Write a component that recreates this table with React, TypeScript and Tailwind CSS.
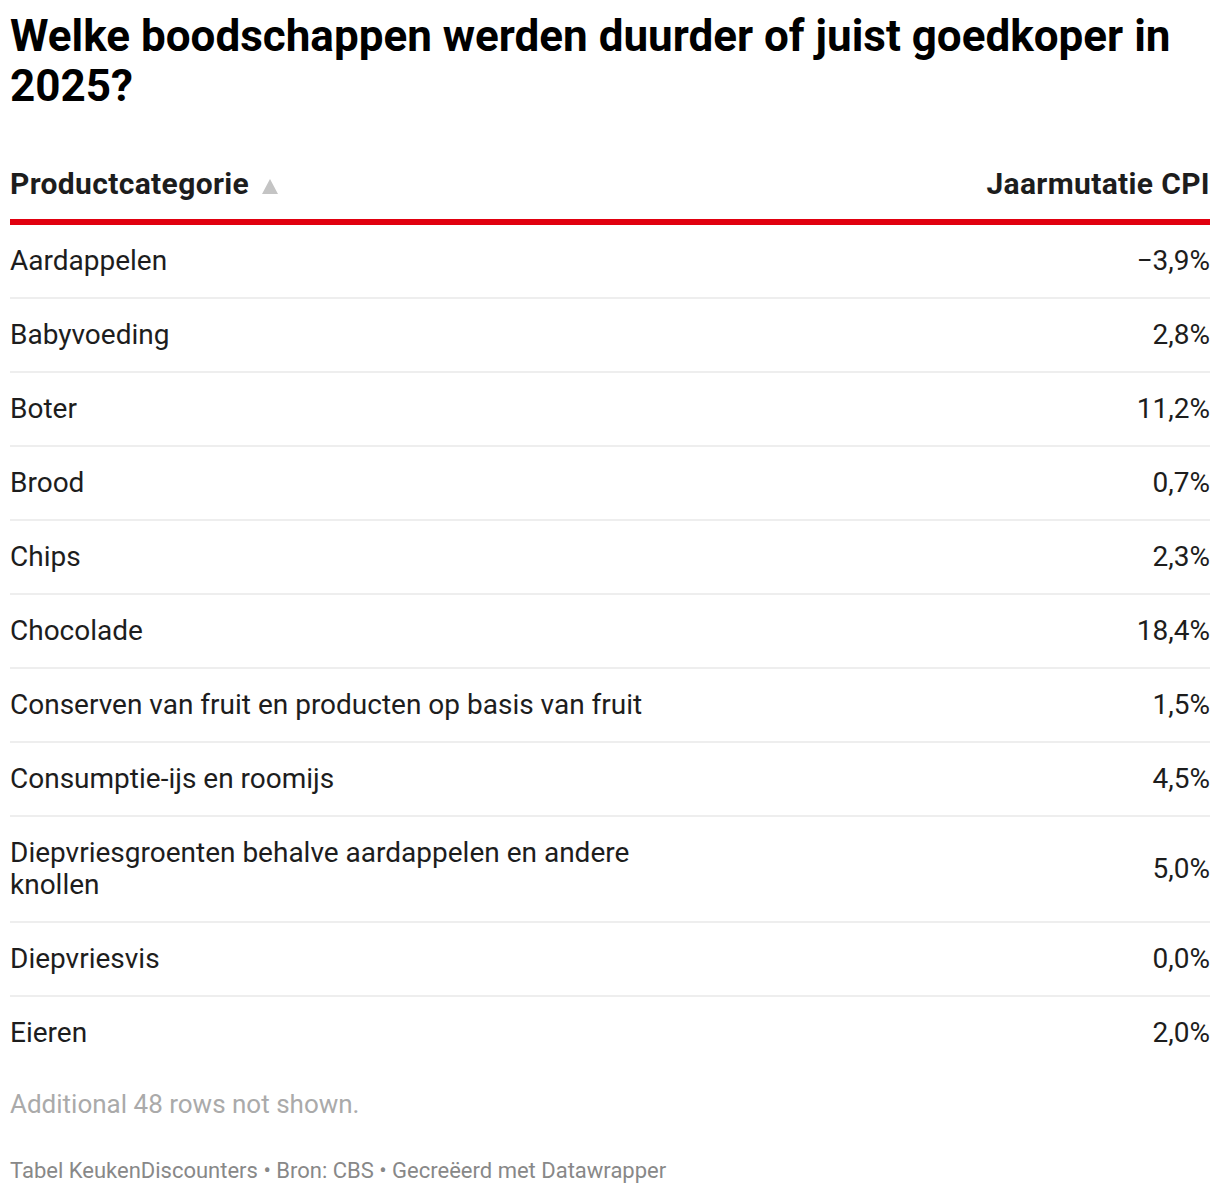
const rows: [string, string][] = [
  ['Aardappelen', '−3,9%'],
  ['Babyvoeding', '2,8%'],
  ['Boter', '11,2%'],
  ['Brood', '0,7%'],
  ['Chips', '2,3%'],
  ['Chocolade', '18,4%'],
  ['Conserven van fruit en producten op basis van fruit', '1,5%'],
  ['Consumptie-ijs en roomijs', '4,5%'],
  ['Diepvriesgroenten behalve aardappelen en andere knollen', '5,0%'],
  ['Diepvriesvis', '0,0%'],
  ['Eieren', '2,0%'],
];

export default function App() {
  return (
    <div className="min-h-[1194px] w-[1220px] bg-white px-[10px] pt-[11px] text-[#1d1d1d]" style={{ fontFamily: 'Roboto, "Liberation Sans", sans-serif' }}>
      <h1 className="text-[44px] font-bold leading-[50px] text-black">
        Welke boodschappen werden duurder of juist goedkoper in 2025?
      </h1>

      <div className="mt-[57px]">
        <div className="flex items-end justify-between pb-[19px] border-b-[6px] border-[#e1000f]">
          <div className="flex items-center gap-[13px] text-[30px] font-bold leading-[32px] tracking-[0.35px]">
            Productcategorie
            <svg width="16" height="15" viewBox="0 0 16 15" className="mt-[4px]">
              <path d="M8 0 L16 15 L0 15 Z" fill="#c4c4c4" />
            </svg>
          </div>
          <div className="text-[30px] font-bold leading-[32px] tracking-[0.35px]">Jaarmutatie CPI</div>
        </div>

        {rows.map(([name, val], i) => (
          <div
            key={name}
            className={`flex items-center justify-between py-[20px] ${i < rows.length - 1 ? 'border-b-2 border-[#eeeeee]' : ''}`}
          >
            <div className="max-w-[660px] text-[28px] leading-[32px]">{name}</div>
            <div className="text-[28px] leading-[32px]">{val}</div>
          </div>
        ))}
      </div>

      <p className="mt-[20px] text-[26px] leading-[30px] text-[#aaaaaa]">Additional 48 rows not shown.</p>
      <p className="mt-[39px] text-[22px] leading-[26px] text-[#888888]">
        Tabel KeukenDiscounters • Bron: CBS • Gecreëerd met Datawrapper
      </p>
    </div>
  );
}
